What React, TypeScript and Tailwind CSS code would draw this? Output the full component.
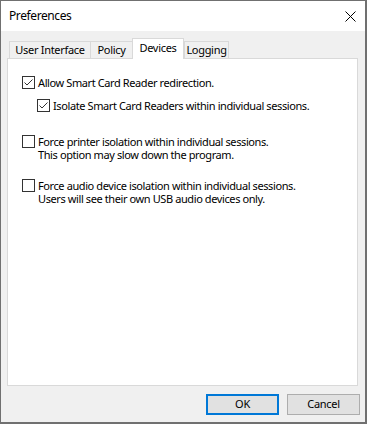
import React from 'react';

const FONT = { fontFamily: '"Noto Sans", "Open Sans", sans-serif' };

function CheckBox({ checked }: { checked: boolean }) {
  return (
    <div className="w-[13px] h-[13px] shrink-0 border border-[#333333] bg-white">
      {checked && (
        <svg width="11" height="11" viewBox="0 0 11 11" className="block">
          <polyline points="1.5,5.5 4,8 9.5,2.5" fill="none" stroke="#333333" strokeWidth="1" />
        </svg>
      )}
    </div>
  );
}

function Option({
  checked,
  lines,
  className = '',
}: {
  checked: boolean;
  lines: string[];
  className?: string;
}) {
  return (
    <div className={`flex items-start gap-[3px] ${className}`}>
      <CheckBox checked={checked} />
      <div className="text-[11px] leading-[13px] tracking-[-0.4px] text-black whitespace-nowrap">
        {lines.map((l) => (
          <div key={l}>{l}</div>
        ))}
      </div>
    </div>
  );
}

const tabs = [
  { label: 'User Interface', width: 'w-[81px]' },
  { label: 'Policy', width: 'w-[42px]' },
  { label: 'Devices', width: 'w-[52px]', active: true },
  { label: 'Logging', width: 'w-[45px]' },
];

export default function App() {
  return (
    <div
      className="w-[367px] h-[424px] flex flex-col bg-[#f0f0f0] border-t border-l border-r-2 border-b-2 border-[#707070] text-black"
      style={FONT}
    >
      {/* title bar */}
      <div className="h-[30px] shrink-0 bg-white flex items-center justify-between pl-[8px] pr-[9px]">
        <span className="text-[12px] tracking-[-0.4px]">Preferences</span>
        <svg width="11" height="11" viewBox="0 0 11 11">
          <path d="M0.5 0.5 L10.5 10.5 M10.5 0.5 L0.5 10.5" stroke="#000" strokeWidth="1" />
        </svg>
      </div>

      <div className="flex-1 flex flex-col px-[6px] pt-[7px]">
        {/* tabs */}
        <div className="relative z-10 flex items-end h-[21px] -mb-px pl-[2px]">
          {tabs.map((t) =>
            t.active ? (
              <div
                key={t.label}
                className={`${t.width} h-[21px] bg-white border-t border-l border-r border-[#d9d9d9] flex items-center justify-center whitespace-nowrap text-[11px] tracking-[-0.3px] pb-[2px]`}
              >
                {t.label}
              </div>
            ) : (
              <div
                key={t.label}
                className={`${t.width} h-[18px] bg-[#f0f0f0] border-t border-b border-l border-[#d9d9d9] last:border-r flex items-center justify-center whitespace-nowrap text-[11px] tracking-[-0.3px]`}
              >
                {t.label}
              </div>
            ),
          )}
        </div>

        {/* panel */}
        <div className="h-[328px] w-[351px] border border-[#d9d9d9] bg-white flex flex-col pl-[14px]">
          <Option checked className="mt-[17px]" lines={['Allow Smart Card Reader redirection.']} />
          <Option
            checked
            className="mt-[10px] ml-[15px]"
            lines={['Isolate Smart Card Readers within individual sessions.']}
          />
          <Option
            checked={false}
            className="mt-[23px]"
            lines={['Force printer isolation within individual sessions.', 'This option may slow down the program.']}
          />
          <Option
            checked={false}
            className="mt-[18px]"
            lines={[
              'Force audio device isolation within individual sessions.',
              'Users will see their own USB audio devices only.',
            ]}
          />
        </div>

        {/* buttons */}
        <div className="flex justify-end gap-[8px] mt-[8px] -mr-px">
          <button className="w-[73px] h-[21px] bg-[#e1e1e1] border-2 border-[#0078d7] text-[11px] tracking-[-0.3px] flex items-center justify-center">
            OK
          </button>
          <button className="w-[73px] h-[21px] bg-[#e1e1e1] border border-[#adadad] text-[11px] tracking-[-0.3px] flex items-center justify-center">
            Cancel
          </button>
        </div>
      </div>
    </div>
  );
}
